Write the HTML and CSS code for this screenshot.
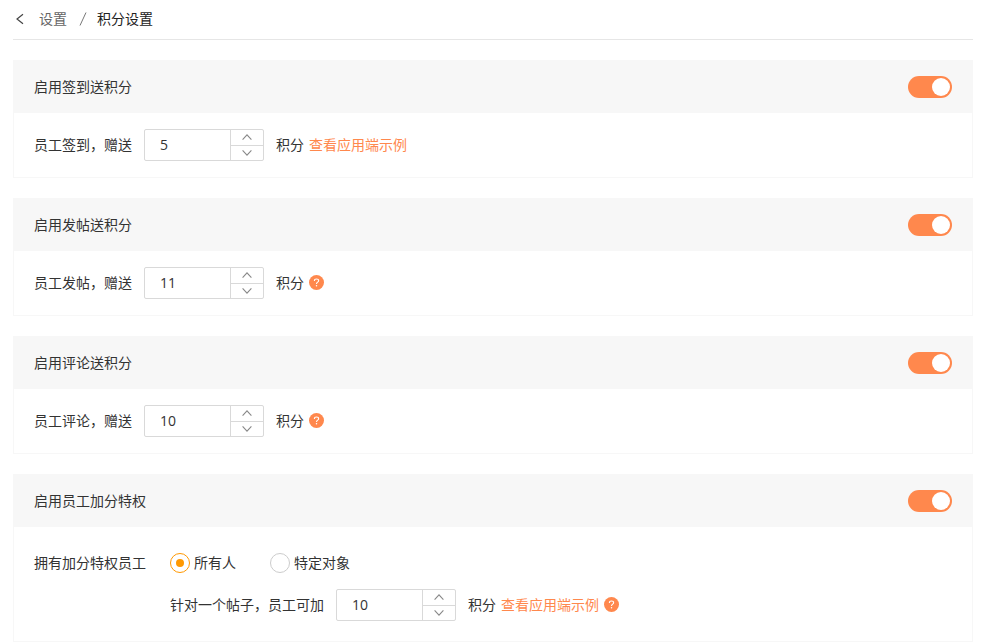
FILE: index.html
```html
<!DOCTYPE html>
<html lang="zh-CN">
<head>
<meta charset="utf-8">
<meta name="viewport" content="width=device-width, initial-scale=1">
<title>积分设置</title>
<link rel="stylesheet" href="styles.css">
</head>
<body>
<svg class="sprite" aria-hidden="true">
  <symbol id="up" viewBox="0 0 10 6"><path d="M.6 5.600 5 .9l4.400 4.700"/></symbol>
  <symbol id="down" viewBox="0 0 10 6"><path d="M.6 .4 5 5.100 9.400 .4"/></symbol>
  <symbol id="help" viewBox="0 0 14 14">
    <circle class="help-disc" cx="7" cy="7" r="7"/>
    <path class="help-mark" d="M5 5.500C5 4.300 5.900 3.700 7 3.700S9 4.300 9 5.400C9 6.700 7 6.700 7 8.300"/>
    <circle class="help-dot" cx="7" cy="10.100" r=".7"/>
  </symbol>
</svg>
<div class="page">
  <nav class="crumbs">
    <a class="back" href="#" aria-label="返回"><svg class="back-icon" viewBox="0 0 8 12"><path d="M7 1.200 1 6l6 4.800"/></svg></a>
    <a class="crumb" href="#">设置</a>
    <svg class="slash" viewBox="0 0 8 14" aria-hidden="true"><path d="M7 .5 1 13.500"/></svg>
    <h1 class="title">积分设置</h1>
  </nav>
  <main class="cards">
    <section class="card">
      <header class="card-head">
        <label for="sw-sign">启用签到送积分</label>
        <input class="switch" id="sw-sign" type="checkbox" role="switch" checked>
      </header>
      <div class="card-body">
        <div class="row">
          <label for="n-sign">员工签到，赠送</label>
          <div class="stepper">
            <input class="number" id="n-sign" type="number" value="5">
            <div class="steps">
              <button class="step" type="button" aria-label="增加"><svg class="arrow"><use href="#up"/></svg></button>
              <button class="step" type="button" aria-label="减少"><svg class="arrow"><use href="#down"/></svg></button>
            </div>
          </div>
          <div class="suffix"><span>积分</span><a class="link" href="#">查看应用端示例</a></div>
        </div>
      </div>
    </section>
    <section class="card">
      <header class="card-head">
        <label for="sw-post">启用发帖送积分</label>
        <input class="switch" id="sw-post" type="checkbox" role="switch" checked>
      </header>
      <div class="card-body">
        <div class="row">
          <label for="n-post">员工发帖，赠送</label>
          <div class="stepper">
            <input class="number" id="n-post" type="number" value="11">
            <div class="steps">
              <button class="step" type="button" aria-label="增加"><svg class="arrow"><use href="#up"/></svg></button>
              <button class="step" type="button" aria-label="减少"><svg class="arrow"><use href="#down"/></svg></button>
            </div>
          </div>
          <div class="suffix"><span>积分</span><button class="help" type="button" aria-label="帮助"><svg class="help-icon"><use href="#help"/></svg></button></div>
        </div>
      </div>
    </section>
    <section class="card">
      <header class="card-head">
        <label for="sw-comment">启用评论送积分</label>
        <input class="switch" id="sw-comment" type="checkbox" role="switch" checked>
      </header>
      <div class="card-body">
        <div class="row">
          <label for="n-comment">员工评论，赠送</label>
          <div class="stepper">
            <input class="number" id="n-comment" type="number" value="10">
            <div class="steps">
              <button class="step" type="button" aria-label="增加"><svg class="arrow"><use href="#up"/></svg></button>
              <button class="step" type="button" aria-label="减少"><svg class="arrow"><use href="#down"/></svg></button>
            </div>
          </div>
          <div class="suffix"><span>积分</span><button class="help" type="button" aria-label="帮助"><svg class="help-icon"><use href="#help"/></svg></button></div>
        </div>
      </div>
    </section>
    <section class="card">
      <header class="card-head">
        <label for="sw-grant">启用员工加分特权</label>
        <input class="switch" id="sw-grant" type="checkbox" role="switch" checked>
      </header>
      <div class="card-body grant">
        <span class="grant-label" id="grant-label">拥有加分特权员工</span>
        <div class="grant-fields">
          <div class="radios" role="radiogroup" aria-labelledby="grant-label">
            <label class="option"><input class="radio" type="radio" name="who" checked>所有人</label>
            <label class="option"><input class="radio" type="radio" name="who">特定对象</label>
          </div>
          <div class="row">
            <label for="n-grant">针对一个帖子，员工可加</label>
            <div class="stepper">
              <input class="number" id="n-grant" type="number" value="10">
              <div class="steps">
                <button class="step" type="button" aria-label="增加"><svg class="arrow"><use href="#up"/></svg></button>
                <button class="step" type="button" aria-label="减少"><svg class="arrow"><use href="#down"/></svg></button>
              </div>
            </div>
            <div class="suffix"><span>积分</span><a class="link" href="#">查看应用端示例</a><button class="help" type="button" aria-label="帮助"><svg class="help-icon"><use href="#help"/></svg></button></div>
          </div>
        </div>
      </div>
    </section>
  </main>
</div>
</body>
</html>
```

FILE: styles.css
```css
* {
  box-sizing: border-box;
}

body {
  margin: 0;
  background: #fff;
  color: #333;
  font: 14px/20px "Open Sans", "Noto Sans CJK SC", sans-serif;
}

.sprite {
  position: absolute;
  width: 0;
  height: 0;
}

.page {
  padding: 0 13px;
}

/* Breadcrumb */
.crumbs {
  display: flex;
  align-items: center;
  height: 40px;
  padding-bottom: 2px;
  border-bottom: 1px solid #e6e6e6;
}

.back {
  display: flex;
  margin: 0 15px 0 3px;
}

.back-icon {
  width: 8px;
  height: 12px;
  fill: none;
  stroke: #444;
  stroke-width: 1.2;
}

.crumb {
  color: #666;
  text-decoration: none;
}

.slash {
  width: 8px;
  height: 14px;
  margin: 0 10px 0 12px;
  fill: none;
  stroke: #777;
}

.title {
  margin: 0;
  color: #222;
  font: inherit;
}

/* Cards */
.cards {
  display: grid;
  gap: 20px;
  padding-top: 20px;
}

.card {
  border: 1px solid #f7f7f7;
}

.card-head {
  display: flex;
  align-items: center;
  justify-content: space-between;
  height: 52px;
  padding: 0 20px;
  background: #f7f7f7;
}

.card-body {
  padding: 16px 20px;
}

.row {
  display: flex;
  align-items: center;
  gap: 12px;
}

.suffix {
  display: flex;
  align-items: center;
  gap: 5px;
}

.link {
  color: #ff884d;
  text-decoration: none;
}

/* Switch */
.switch {
  appearance: none;
  display: flex;
  justify-content: flex-start;
  width: 44px;
  height: 22px;
  margin: 0;
  padding: 2px;
  border-radius: 11px;
  background: #bfbfbf;
}

.switch::before {
  content: "";
  width: 18px;
  height: 18px;
  border-radius: 50%;
  background: #fff;
}

.switch:checked {
  justify-content: flex-end;
  background: #ff884d;
}

/* Number field */
.stepper {
  display: flex;
  width: 120px;
  height: 32px;
  border: 1px solid #d9d9d9;
  border-radius: 2px;
  overflow: hidden;
}

.number {
  appearance: textfield;
  flex: 1;
  min-width: 0;
  padding: 0 0 0 15px;
  border: 0;
  background: transparent;
  color: #333;
  font: inherit;
}

.number::-webkit-inner-spin-button {
  appearance: none;
  margin: 0;
}

.steps {
  display: flex;
  flex-direction: column;
  width: 33px;
  border-left: 1px solid #d9d9d9;
}

.step {
  display: flex;
  flex: 1;
  align-items: center;
  justify-content: center;
  padding: 0;
  border: 0;
  background: transparent;
}

.step + .step {
  border-top: 1px solid #d9d9d9;
}

.arrow {
  width: 10px;
  height: 6px;
  fill: none;
  stroke: #888;
  stroke-width: 1.1;
}

/* Help */
.help {
  display: flex;
  padding: 0 0 2px;
  border: 0;
  background: transparent;
}

.help-icon {
  width: 15px;
  height: 15px;
}

.help-disc {
  fill: #ff884d;
}

.help-mark {
  fill: none;
  stroke: #fff;
}

.help-dot {
  fill: #fff;
}

/* Privilege settings */
.grant {
  display: flex;
  gap: 24px;
  padding: 20px;
}

.grant-label {
  line-height: 32px;
}

.grant-fields {
  display: grid;
  gap: 10px;
}

.radios {
  display: flex;
  gap: 34px;
  height: 32px;
}

.option {
  display: flex;
  align-items: center;
  gap: 4px;
}

.radio {
  appearance: none;
  display: grid;
  place-content: center;
  width: 20px;
  height: 20px;
  margin: 0;
  border: 1px solid #ccc;
  border-radius: 50%;
  background: #fff;
}

.radio:checked {
  border-color: #ff9800;
}

.radio:checked::before {
  content: "";
  width: 8px;
  height: 8px;
  border-radius: 50%;
  background: #ff9800;
}
```
